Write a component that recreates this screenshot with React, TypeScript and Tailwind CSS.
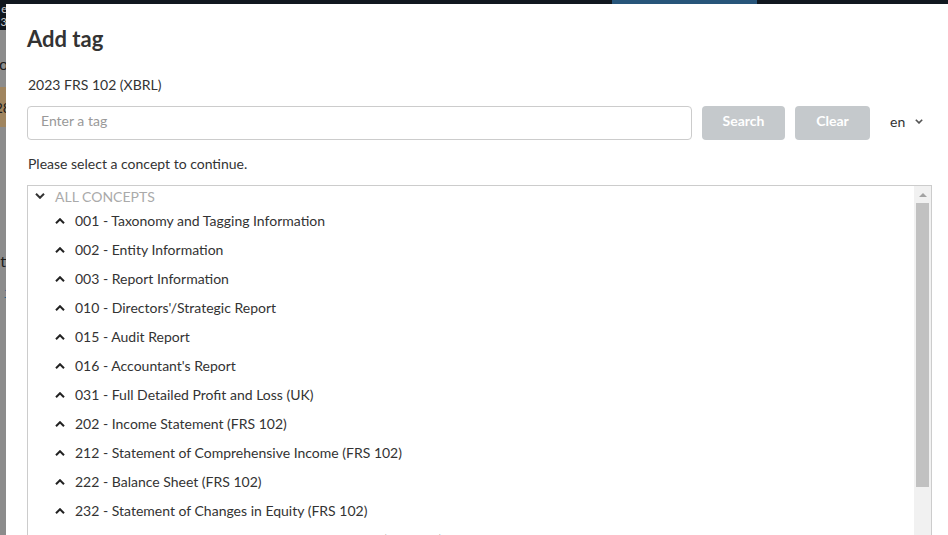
import React from 'react';

const CONCEPTS = [
  '001 - Taxonomy and Tagging Information',
  '002 - Entity Information',
  '003 - Report Information',
  "010 - Directors'/Strategic Report",
  '015 - Audit Report',
  "016 - Accountant's Report",
  '031 - Full Detailed Profit and Loss (UK)',
  '202 - Income Statement (FRS 102)',
  '212 - Statement of Comprehensive Income (FRS 102)',
  '222 - Balance Sheet (FRS 102)',
  '232 - Statement of Changes in Equity (FRS 102)',
  '242 - Statement of Income and Retained Earnings (FRS 102)',
];

function Chevron({ up, className }: { up?: boolean; className?: string }) {
  return (
    <svg viewBox="0 0 10 6" className={className} fill="none" stroke="currentColor" strokeWidth={2}>
      {up ? <polyline points="1,5.2 5,1.2 9,5.2" /> : <polyline points="1,0.8 5,4.8 9,0.8" />}
    </svg>
  );
}

export default function App() {
  return (
    <div className="relative w-[948px] h-[535px] overflow-hidden bg-[#8c8c8c] font-['Lato','Noto_Sans',sans-serif]">
      {/* Backdrop: page behind the dialog, already dimmed */}
      <div className="flex flex-col">
        <div className="h-[30px] bg-[#11181f] flex">
          <div className="w-[6px] overflow-hidden text-[11px] leading-[13px] text-[#c9ccd0] flex flex-col items-end pt-[2px]">
            <span className="-mr-[1px]">e</span>
            <span className="-mr-[1px]">3</span>
          </div>
          <div className="ml-[606px] w-[145px] h-[4px] bg-[#27557a]" />
        </div>
        <div className="w-[6px] overflow-hidden flex flex-col items-end text-[#1c1c1c]">
          <span className="mt-[24px] text-[16px] leading-[20px] -mr-[2px]">o</span>
          <div className="mt-[13px] w-[6px] h-[40px] bg-[#a0855f] flex items-center justify-end text-[14px]">
            <span className="-mr-[5px]">28</span>
          </div>
          <span className="mt-[124px] text-[16px] leading-[20px] -mr-[4px]">ti</span>
          <span className="mt-[14px] text-[12px] leading-[14px] -mr-[3px] text-[#2c5d8a] underline">t</span>
        </div>
      </div>

      {/* Dialog */}
      <div className="absolute left-[6px] top-[4px] w-[947px] h-[600px] bg-white px-[21px] pt-[20px] text-[#333]">
        <h2 className="text-[22px] leading-[30px] font-bold text-[#333]">Add tag</h2>
        <div className="mt-[21px] pl-[1px] text-[14px] leading-5">2023 FRS 102 (XBRL)</div>

        <div className="mt-[11px] w-[905px] flex items-center h-[34px]">
          <input
            placeholder="Enter a tag"
            className="w-[665px] shrink-0 h-[34px] rounded-[4px] border border-[#ccc] px-[13px] pb-[6px] text-[14px] text-[#333] placeholder:text-[#999] outline-none"
          />
          <button className="ml-[10px] shrink-0 w-[83px] h-[34px] pb-[6px] rounded-[4px] bg-[#c5c9cc] text-white text-[14px] font-bold">
            Search
          </button>
          <button className="ml-[10px] shrink-0 w-[75px] h-[34px] pb-[6px] rounded-[4px] bg-[#c5c9cc] text-white text-[14px] font-bold">
            Clear
          </button>
          <div className="w-[62px] shrink-0 pl-[20px] pb-[3px] flex items-center text-[14px] text-[#333]">
            en
            <Chevron className="ml-[10px] w-[8px] h-[5px] text-[#555]" />
          </div>
        </div>

        <div className="mt-[14px] pl-[1px] text-[14px] leading-5">Please select a concept to continue.</div>

        <div className="mt-[11px] w-[905px] h-[400px] border border-[#ccc] flex">
          <div className="flex-1 flex flex-col">
            <div className="h-[20px] flex items-center pl-[7px] shrink-0">
              <Chevron className="w-[10px] h-[6px] text-[#333]" />
              <span className="ml-[10px] text-[14px] uppercase text-[#aaa]">All concepts</span>
            </div>
            {CONCEPTS.map((c) => (
              <div key={c} className="h-[29px] flex items-center pl-[27px] shrink-0">
                <Chevron up className="w-[10px] h-[6px] text-[#222]" />
                <span className="ml-[10px] text-[14px] text-[#333]">{c}</span>
              </div>
            ))}
          </div>
          <div className="w-[17px] bg-[#f1f1f1] flex flex-col items-center">
            <div className="h-[17px] flex items-center justify-center">
              <div className="w-0 h-0 border-l-[4px] border-r-[4px] border-b-[4px] border-l-transparent border-r-transparent border-b-[#a3a3a3]" />
            </div>
            <div className="w-[13px] h-[284px] bg-[#c1c1c1]" />
          </div>
        </div>
      </div>
    </div>
  );
}
